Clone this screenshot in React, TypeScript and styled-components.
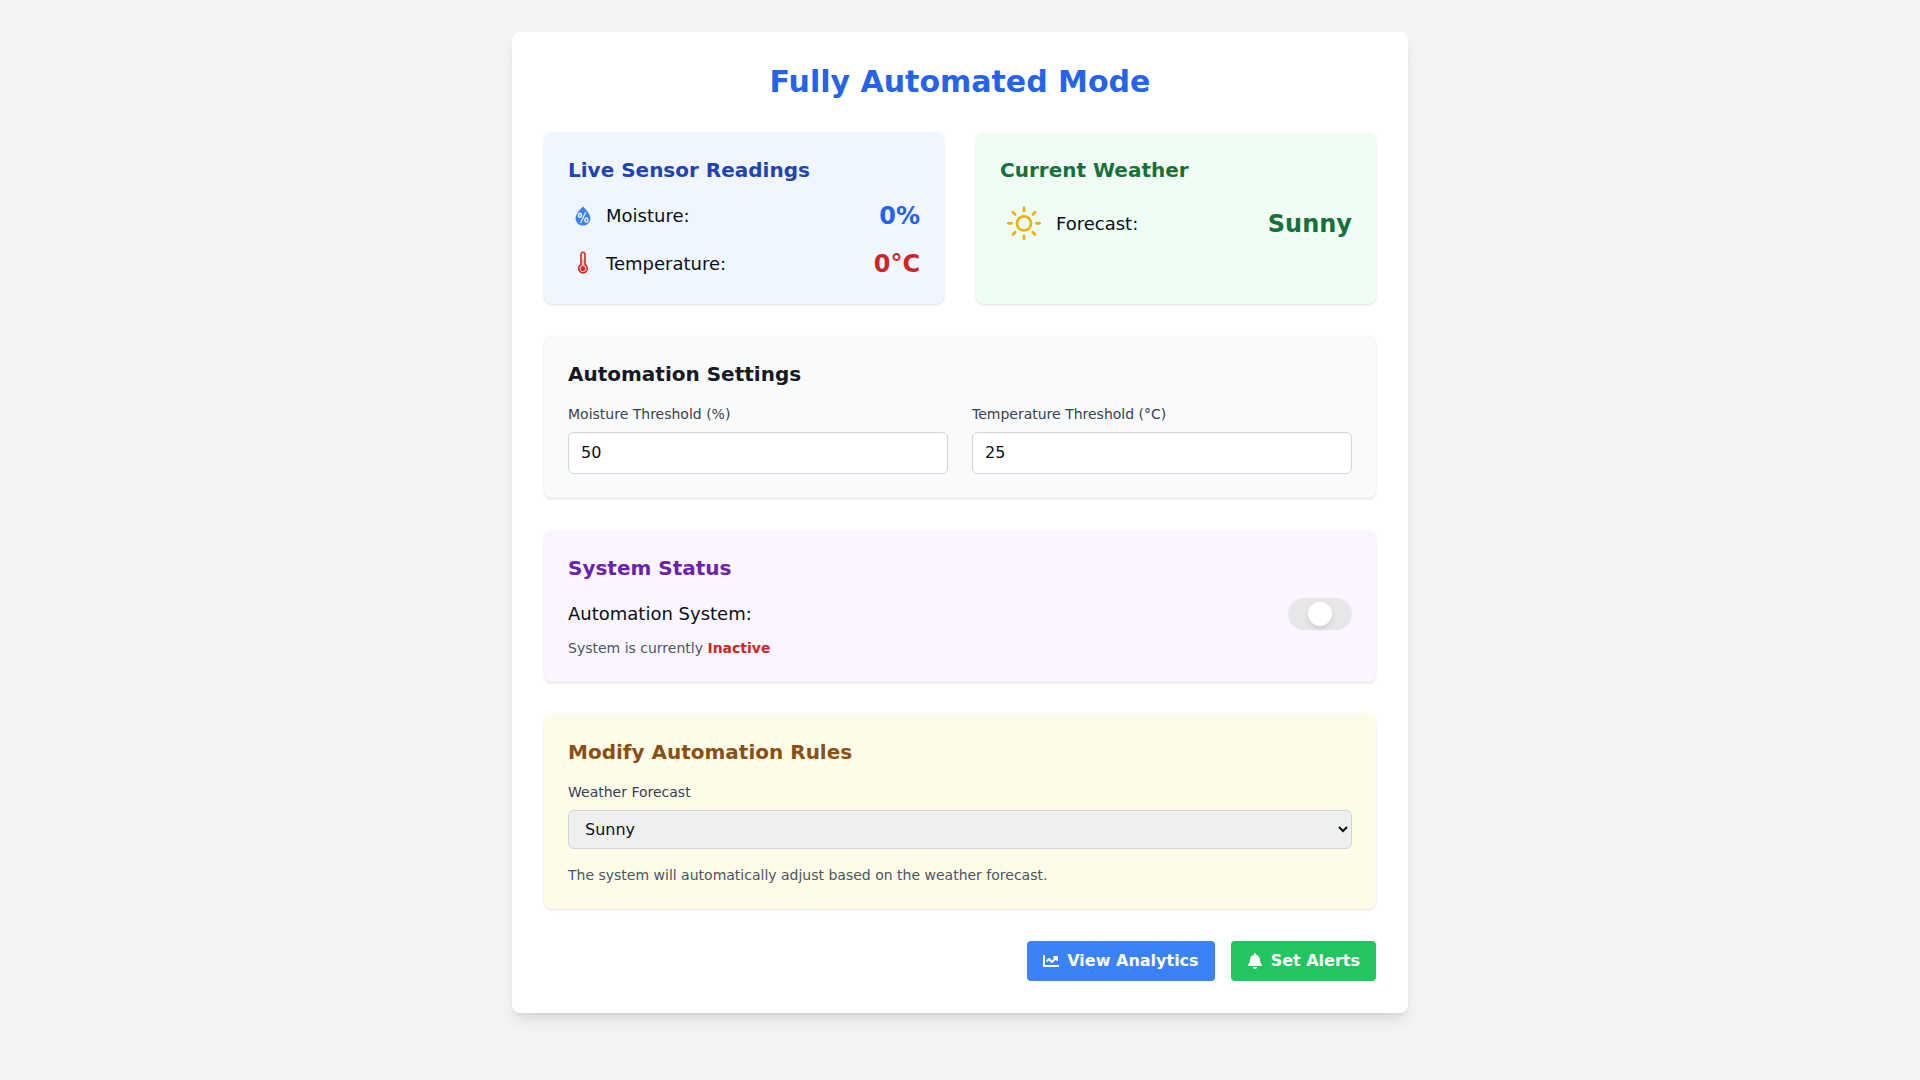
import React, { useState } from 'react';
import styled, { createGlobalStyle } from 'styled-components';
import { WiHumidity, WiThermometer, WiDaySunny } from 'react-icons/wi';
import { FaChartLine, FaBell } from 'react-icons/fa';

const GlobalStyle = createGlobalStyle`
  *, *::before, *::after { box-sizing: border-box; }
  body {
    margin: 0;
    background: #f3f4f6;
    color: #0b0f17;
    font-family: 'DejaVu Sans', 'Noto Sans', sans-serif;
    font-size: 16px;
    line-height: 24px;
  }
  h1, h2, p { margin: 0; }
  button, input, select { font: inherit; color: inherit; }
`;

const Page = styled.div`
  min-height: 100vh;
  padding: 32px;
`;

const Card = styled.main`
  max-width: 896px;
  margin: 0 auto;
  padding: 32px;
  display: flex;
  flex-direction: column;
  gap: 32px;
  background: #fff;
  border-radius: 8px;
  box-shadow: 0 10px 15px -3px rgba(0, 0, 0, 0.1), 0 4px 6px -4px rgba(0, 0, 0, 0.1);
`;

const Title = styled.h1`
  font-size: 30px;
  line-height: 36px;
  font-weight: 700;
  text-align: center;
  color: #2563eb;
`;

const Columns = styled.div<{ $gap: number }>`
  display: grid;
  grid-template-columns: repeat(2, minmax(0, 1fr));
  gap: ${({ $gap }) => $gap}px;
`;

const Panel = styled.section<{ $bg: string }>`
  padding: 24px;
  border-radius: 8px;
  background: ${({ $bg }) => $bg};
  box-shadow: 0 1px 3px rgba(0, 0, 0, 0.1), 0 1px 2px -1px rgba(0, 0, 0, 0.1);
`;

const Heading = styled.h2<{ $color: string }>`
  margin-bottom: 16px;
  font-size: 20px;
  line-height: 28px;
  font-weight: 600;
  color: ${({ $color }) => $color};
`;

const Stack = styled.div`
  display: flex;
  flex-direction: column;
  gap: 16px;
`;

const Row = styled.div`
  display: flex;
  align-items: center;
  justify-content: space-between;
`;

const Reading = styled.span<{ $icon: string }>`
  display: flex;
  align-items: center;
  gap: 8px;
  font-size: 18px;
  line-height: 28px;
  svg { color: ${({ $icon }) => $icon}; }
`;

const Value = styled.span<{ $color: string }>`
  font-size: 24px;
  line-height: 32px;
  font-weight: 700;
  color: ${({ $color }) => $color};
`;

const Label = styled.label`
  display: block;
  margin-bottom: 8px;
  font-size: 14px;
  line-height: 20px;
  color: #374151;
`;

const Input = styled.input`
  display: block;
  width: 100%;
  padding: 8px 12px;
  border: 1px solid #d1d5db;
  border-radius: 6px;
  background: #fff;
  appearance: textfield;
  &::-webkit-inner-spin-button { appearance: none; margin: 0; }
`;

const Select = styled.select`
  display: block;
  width: 100%;
  padding: 8px 12px;
  border: 1px solid #d1d5db;
  border-radius: 6px;
  background-color: #eef0ef;
`;

const SwitchLabel = styled.label`
  font-size: 18px;
  line-height: 28px;
`;

const Switch = styled.input`
  appearance: none;
  display: flex;
  align-items: center;
  justify-content: center;
  width: 64px;
  height: 32px;
  margin: 0;
  border-radius: 16px;
  background: #e5e7e9;
  cursor: pointer;
  &::before {
    content: '';
    width: 24px;
    height: 24px;
    border-radius: 50%;
    background: #fff;
    box-shadow: 0 4px 6px -1px rgba(0, 0, 0, 0.1), 0 2px 4px -2px rgba(0, 0, 0, 0.1);
  }
  &:checked {
    justify-content: flex-end;
    padding-right: 4px;
    background: #22c55e;
  }
`;

const Note = styled.p<{ $gap: number }>`
  margin-top: ${({ $gap }) => $gap}px;
  font-size: 14px;
  line-height: 20px;
  color: #4b5563;
`;

const State = styled.strong<{ $on: boolean }>`
  font-weight: 700;
  color: ${({ $on }) => ($on ? '#16a34a' : '#cd2626')};
`;

const Actions = styled.div`
  display: flex;
  justify-content: flex-end;
  gap: 16px;
`;

const Button = styled.button<{ $bg: string }>`
  display: flex;
  align-items: center;
  gap: 8px;
  padding: 8px 16px;
  border: 0;
  border-radius: 4px;
  background: ${({ $bg }) => $bg};
  color: #fff;
  font-weight: 700;
  cursor: pointer;
`;

export default function App() {
  const [active, setActive] = useState(false);
  const [moisture, setMoisture] = useState('50');
  const [temperature, setTemperature] = useState('25');
  const [forecast, setForecast] = useState('Sunny');

  return (
    <>
      <GlobalStyle />
      <Page>
        <Card>
          <Title>Fully Automated Mode</Title>

          <Columns $gap={32}>
            <Panel $bg="#eff6ff">
              <Heading $color="#2143b1">Live Sensor Readings</Heading>
              <Stack>
                <Row>
                  <Reading $icon="#3b82f6"><WiHumidity size={30} />Moisture:</Reading>
                  <Value $color="#2563eb">0%</Value>
                </Row>
                <Row>
                  <Reading $icon="#cd2f26"><WiThermometer size={30} />Temperature:</Reading>
                  <Value $color="#cd2626">0°C</Value>
                </Row>
              </Stack>
            </Panel>
            <Panel $bg="#f0fdf4">
              <Heading $color="#16703c">Current Weather</Heading>
              <Row>
                <Reading $icon="#eab308"><WiDaySunny size={48} />Forecast:</Reading>
                <Value $color="#16703c">{forecast}</Value>
              </Row>
            </Panel>
          </Columns>

          <Panel $bg="#f9fafb">
            <Heading $color="#151a24">Automation Settings</Heading>
            <Columns $gap={24}>
              <div>
                <Label htmlFor="moisture">Moisture Threshold (%)</Label>
                <Input id="moisture" type="number" value={moisture} onChange={(e) => setMoisture(e.target.value)} />
              </div>
              <div>
                <Label htmlFor="temperature">Temperature Threshold (°C)</Label>
                <Input id="temperature" type="number" value={temperature} onChange={(e) => setTemperature(e.target.value)} />
              </div>
            </Columns>
          </Panel>

          <Panel $bg="#faf5ff">
            <Heading $color="#6b21a8">System Status</Heading>
            <Row>
              <SwitchLabel htmlFor="system">Automation System:</SwitchLabel>
              <Switch
                id="system"
                type="checkbox"
                role="switch"
                checked={active}
                onChange={(e) => setActive(e.target.checked)}
              />
            </Row>
            <Note $gap={8}>
              System is currently <State $on={active}>{active ? 'Active' : 'Inactive'}</State>
            </Note>
          </Panel>

          <Panel $bg="#fefce8">
            <Heading $color="#8a5013">Modify Automation Rules</Heading>
            <Label htmlFor="forecast">Weather Forecast</Label>
            <Select id="forecast" value={forecast} onChange={(e) => setForecast(e.target.value)}>
              <option>Sunny</option>
              <option>Cloudy</option>
              <option>Rainy</option>
            </Select>
            <Note $gap={16}>The system will automatically adjust based on the weather forecast.</Note>
          </Panel>

          <Actions>
            <Button type="button" $bg="#3b82f6"><FaChartLine size={16} />View Analytics</Button>
            <Button type="button" $bg="#22c55e"><FaBell size={16} />Set Alerts</Button>
          </Actions>
        </Card>
      </Page>
    </>
  );
}
